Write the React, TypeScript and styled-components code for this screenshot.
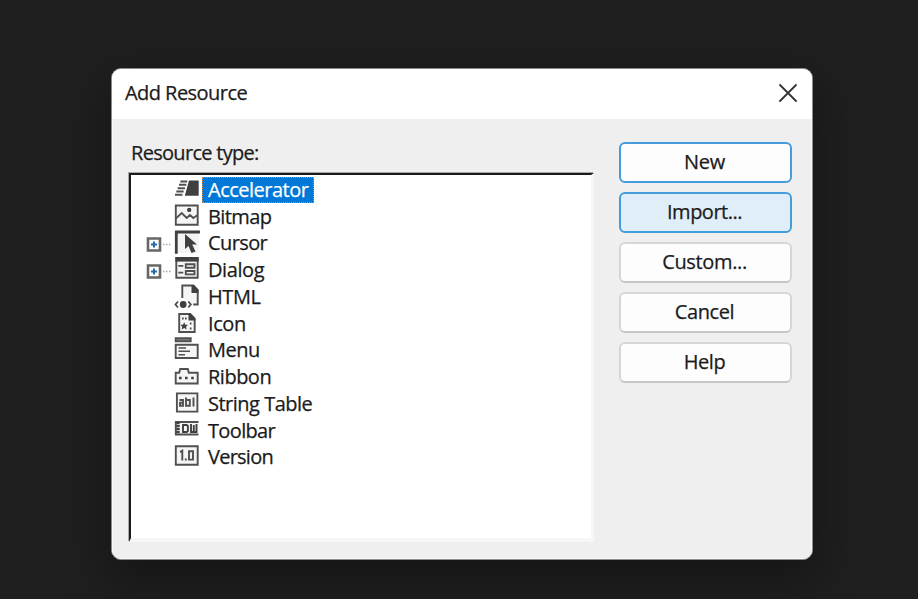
import React from 'react';
import styled, { createGlobalStyle } from 'styled-components';

const Global = createGlobalStyle`
  * { box-sizing: border-box; }
  body { margin: 0; background: #1f1f1f; overflow: hidden; }
`;

const Desktop = styled.main`
  height: 599px;
  padding: 68px 0 0 111px;
  background: #1f1f1f;
  color: #1b1b1b;
  font: 20px/26px 'Open Sans', 'Noto Sans', sans-serif;
  -webkit-text-stroke: 0.25px currentColor;
  overflow: hidden;
`;

const Dialog = styled.section`
  display: flex;
  flex-direction: column;
  width: 702px;
  height: 492px;
  border: 1px solid #8b8b8b;
  border-radius: 10px;
  background: #efefef;
  overflow: hidden;
  box-shadow: 0 18px 48px 4px rgba(0, 0, 0, 0.3);
`;

const TitleBar = styled.header`
  display: flex;
  align-items: center;
  justify-content: space-between;
  flex: none;
  height: 50px;
  padding: 0 15px 2px 13px;
  background: #fff;
`;

const Text = styled.span<{ $spacing?: number }>`
  display: block;
  white-space: pre;
  letter-spacing: ${(p) => p.$spacing ?? 0}px;
`;

const CloseButton = styled.button`
  display: flex;
  padding: 0 0 1px;
  border: 0;
  background: none;
`;

const Body = styled.div`
  display: flex;
  flex: 1;
  gap: 25px;
  padding: 21px 0 16px 16px;
  border: solid #fafafa;
  border-width: 0 1px 1px;
`;

const ListColumn = styled.div`
  display: flex;
  flex-direction: column;
  width: 465px;
`;

const Label = styled.label`
  height: 33px;
  padding: 0 0 0 2px;
`;

const Tree = styled.ul`
  flex: 1;
  margin: 0;
  padding: 1.5px 0 0;
  list-style: none;
  background: #fff;
  border: solid;
  border-width: 2px 3px 4px 2px;
  border-color: #1b1b1b #f6f6f6 #f6f6f6 #1b1b1b;
  box-shadow: -1px -1px 0 #a5a8a4;
`;

const TreeRow = styled.li`
  display: flex;
  align-items: center;
  height: 26.75px;
  padding-left: 15px;
`;

const Expander = styled.span`
  display: flex;
  width: 28px;
  height: 26px;
`;

const ItemText = styled.span<{ $selected?: boolean; $spacing: number }>`
  height: 26px;
  margin-left: 2px;
  padding: 0 6px;
  line-height: 26px;
  white-space: pre;
  letter-spacing: ${(p) => p.$spacing}px;
  color: ${(p) => (p.$selected ? '#fff' : '#1b1b1b')};
  background: ${(p) => (p.$selected ? '#0078d7' : 'transparent')};
  outline: ${(p) => (p.$selected ? '1px dotted #d58a45' : 'none')};
  outline-offset: -1px;
`;

const Actions = styled.div`
  display: flex;
  flex-direction: column;
  gap: 9px;
  padding-top: 1.5px;
`;

const Button = styled.button<{ $tone?: 'default' | 'hover' }>`
  display: flex;
  align-items: center;
  justify-content: center;
  width: 173px;
  height: 41px;
  padding: 0 2px 1px 0;
  border: 2px solid ${(p) => (p.$tone ? '#459cdd' : '#d6d6d6')};
  border-bottom-color: ${(p) => (p.$tone ? '#459cdd' : '#c6c6c6')};
  border-radius: 6px;
  background: ${(p) => (p.$tone === 'hover' ? '#e0eef9' : '#fdfdfd')};
  color: #1b1b1b;
  font: inherit;
`;

const Glyph = ({ children }: { children: React.ReactNode }) => (
  <svg width="26" height="26" viewBox="0 0 26 26" fill="none" stroke="#505050" strokeWidth="1.9">
    {children}
  </svg>
);

const dark = '#404040';

const icons: Record<string, React.ReactNode> = {
  Accelerator: (
    <>
      <path d="M15 3.5h9.7v15.3H10.8z" fill={dark} stroke="none" />
      <path d="M6.3 4.5h7M5 7.8h7.4M3.6 11.2h7.4M2.3 14.5h7.4M1 17.8h7.5" />
    </>
  ),
  Bitmap: (
    <>
      <path d="M1.8 1.5h21.9v19.2H1.8z" fill="#f5f5f5" />
      <path d="M2 14.4 7.7 9l5 5 3.3-3 3.3 3 4-2.8" />
      <circle cx="15.2" cy="5.9" r="2.2" fill={dark} stroke="none" />
    </>
  ),
  Cursor: (
    <>
      <path d="M3 3h22v20H3z" fill="#f4f4f4" stroke="none" />
      <path d="M2.3 23.7V2H26" stroke={dark} strokeWidth="2.8" />
      <path d="M11 4v15l3.5-3 3 7 4-1.5-3.3-7H23z" fill={dark} stroke="none" />
    </>
  ),
  Dialog: (
    <>
      <path d="M2.3 1h21.4v19.8H2.3z" fill="#f5f5f5" />
      <path d="M1.4.1h23.2v4.5H1.4z" fill={dark} stroke="none" />
      <path d="M4.3 8.9h5M4.3 15.6h5M11.8 7.3h8.7v3.4h-8.7zM11.8 14h8.7v3.4h-8.7z" />
    </>
  ),
  HTML: (
    <>
      <path d="M8.3 14V1.5h11l4.4 5v14h-4.5" fill="#f5f5f5" />
      <path d="M17.5 1h2.5l4.5 4.5V9h-7z" fill={dark} stroke="none" />
      <path d="m4 17.5-2.5 3L4 23.5M14.3 17.5l2.5 3-2.5 3" />
      <circle cx="9.2" cy="20.5" r="3.4" fill={dark} stroke="none" />
    </>
  ),
  Icon: (
    <>
      <path d="M5.2 3h11l4.5 4.7V21H5.2z" fill="#f5f5f5" />
      <path d="M14.5 2.5h2l4.7 5v2h-6.7z" fill={dark} stroke="none" />
      <path d="m10.2 11.2 1.1 2.5 2.7.1-1.9 1.9.6 2.8-2.5-1.4-2.5 1.4.5-2.8-1.8-1.9 2.6-.1z" fill={dark} stroke="none" />
      <path d="M8 7.5h1.7M11 7.5h1.7M15.8 12.5h1.7M15.8 17.5h1.7" />
    </>
  ),
  Menu: (
    <>
      <path d="M1.7 1.3h15v3h-15z" fill="#888" />
      <path d="M1.7 7.8h22v13.2h-22z" fill="#f5f5f5" />
      <path d="M4.5 11H12M4.5 14.3H16M4.5 17.7H11" strokeWidth="1.6" />
    </>
  ),
  Ribbon: (
    <>
      <path d="M1.7 19.5V8.8h3.5l1-3.8h7.6l1 3.8h8.9v10.7z" fill="#f5f5f5" />
      <path d="M5 14h2.6M11 14h2.6M17.2 14h2.6" strokeWidth="2.6" stroke={dark} />
    </>
  ),
  'String Table': (
    <>
      <path d="M2.9 2.4h20.5v18.2H2.9z" fill="#f5f5f5" />
      <path d="M5.5 9H9v5.8H6v-3h3M12 6.5v8.3h3.8V9H12M19.5 6.5v9.1" />
    </>
  ),
  Toolbar: (
    <>
      <path d="M24.5 4H1.8v12.5h22.7" fill="#f5f5f5" />
      <path d="M4 4v12.5" stroke={dark} strokeWidth="3.4" strokeDasharray="2.2 .8" />
      <path d="M9 7v7h3.7l1.2-1V8l-1.2-1zM17 6v8h5.5V6M19.8 7v7" stroke={dark} />
    </>
  ),
  Version: (
    <>
      <path d="M1.8 2.3h21.9v18.4H1.8z" fill="#f5f5f5" />
      <path d="m6 8 2.3-1.3v9.8M11.8 14.5v2M15 7.3h4v8.3h-4z" />
    </>
  ),
};

const items: { name: string; spacing: number; expandable?: boolean; selected?: boolean }[] = [
  { name: 'Accelerator', spacing: -0.5, selected: true },
  { name: 'Bitmap', spacing: -0.6 },
  { name: 'Cursor', spacing: -0.6, expandable: true },
  { name: 'Dialog', spacing: -0.4, expandable: true },
  { name: 'HTML', spacing: -0.4 },
  { name: 'Icon', spacing: -0.4 },
  { name: 'Menu', spacing: -0.5 },
  { name: 'Ribbon', spacing: -0.5 },
  { name: 'String Table', spacing: -0.5 },
  { name: 'Toolbar', spacing: -0.65 },
  { name: 'Version', spacing: -0.75 },
];

const actions: { name: string; spacing: number; tone?: 'default' | 'hover' }[] = [
  { name: 'New', spacing: -0.3, tone: 'default' },
  { name: 'Import...', spacing: -0.5, tone: 'hover' },
  { name: 'Custom...', spacing: -0.35 },
  { name: 'Cancel', spacing: -0.4 },
  { name: 'Help', spacing: -0.4 },
];

const PlusBox = () => (
  <svg width="28" height="26" viewBox="0 0 28 26" fill="none">
    <path d="M2 8.5h12v12H2z" fill="#fff" stroke="#666" strokeWidth="2.6" />
    <path d="M5 14.5h6M8 11.5v6" stroke="#2268ad" strokeWidth="2" />
    <path d="M17 14.5h9" stroke="#aaa" strokeWidth="1.3" strokeDasharray="1.5 1.5" />
  </svg>
);

export default function App() {
  return (
    <>
      <Global />
      <Desktop>
        <Dialog>
          <TitleBar>
            <Text $spacing={-0.55}>Add Resource</Text>
            <CloseButton aria-label="Close">
              <svg width="18" height="18" viewBox="0 0 18 18" stroke="#333" strokeWidth="1.8" strokeLinecap="round">
                <path d="m1 1 16 16M17 1 1 17" />
              </svg>
            </CloseButton>
          </TitleBar>
          <Body>
            <ListColumn>
              <Label>
                <Text $spacing={-0.7}>Resource type:</Text>
              </Label>
              <Tree>
                {items.map((item) => (
                  <TreeRow key={item.name}>
                    <Expander>{item.expandable && <PlusBox />}</Expander>
                    <Glyph>{icons[item.name]}</Glyph>
                    <ItemText $selected={item.selected} $spacing={item.spacing}>
                      {item.name}
                    </ItemText>
                  </TreeRow>
                ))}
              </Tree>
            </ListColumn>
            <Actions>
              {actions.map((action) => (
                <Button key={action.name} $tone={action.tone}>
                  <Text $spacing={action.spacing}>{action.name}</Text>
                </Button>
              ))}
            </Actions>
          </Body>
        </Dialog>
      </Desktop>
    </>
  );
}
